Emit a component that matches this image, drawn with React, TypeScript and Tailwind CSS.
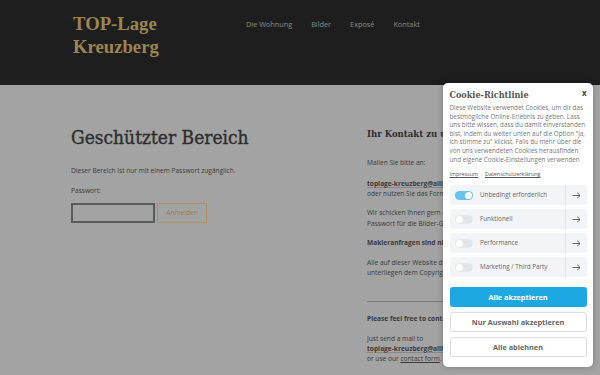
import React from "react";

const sans = { fontFamily: '"Open Sans", "DejaVu Sans", sans-serif' };
const slab = { fontFamily: '"DejaVu Serif Condensed", "DejaVu Serif", serif', fontStretch: "condensed" as const };

function Toggle({ on }: { on?: boolean }) {
  return (
    <div
      className={`relative h-[9px] w-[18px] rounded-full ${on ? "bg-[#68c2ea]" : "bg-[#e4e5eb]"}`}
    >
      <div
        className={`absolute top-[1px] h-[7px] w-[7px] rounded-full bg-white ${on ? "left-[10px]" : "left-[1px]"}`}
      />
    </div>
  );
}

function Row({ label, on }: { label: string; on?: boolean }) {
  return (
    <div className="flex h-[20px] items-center rounded-[3px] bg-[#f3f4f7]">
      <div className="flex flex-1 items-center gap-[7px] pl-[5px]">
        <Toggle on={on} />
        <span className="text-[6.3px] text-[#666]">{label}</span>
      </div>
      <div className="h-full w-px bg-[#e2e3e8]" />
      <div className="flex w-[21px] items-center justify-center text-[#555]">
        <svg width="9" height="7" viewBox="0 0 9 7" fill="none" stroke="currentColor" strokeWidth="0.9">
          <path d="M0.5 3.5H8M5.2 0.8L8 3.5L5.2 6.2" />
        </svg>
      </div>
    </div>
  );
}

export default function App() {
  return (
    <div className="relative h-[375px] w-[600px] overflow-hidden bg-[#a3a3a3]" style={sans}>
      <header className="flex h-[85px] bg-[#1e1e1e] pt-[12px]">
        <div
          className="w-[246px] shrink-0 pl-[73px] text-[18.7px] font-bold leading-[23px] text-[#9c8550]"
          style={{ fontFamily: '"Liberation Serif", serif' }}
        >
          <div>TOP-Lage</div>
          <div>Kreuzberg</div>
        </div>
        <nav className="flex gap-[19px] pt-[7px] text-[7.3px] leading-[10px] text-[#8a8a8a]">
          <span>Die Wohnung</span>
          <span>Bilder</span>
          <span>Exposé</span>
          <span>Kontakt</span>
        </nav>
      </header>

      <main className="flex">
        <section className="w-[367px] shrink-0 pl-[71px] text-[#3a3a3a]">
          <h1
            className="mt-[40px] text-[19px] leading-[24px] text-[#2d2d2d] [-webkit-text-stroke:0.35px_#2d2d2d]"
            style={slab}
          >
            Geschützter Bereich
          </h1>
          <p className="mt-[17px] whitespace-nowrap text-[6.6px] leading-[10px]">
            Dieser Bereich ist nur mit einem Passwort zugänglich.
          </p>
          <p className="mt-[10px] text-[6.6px] leading-[10px]">Passwort:</p>
          <div className="mt-[7px] flex gap-[2px]">
            <div className="h-[20px] w-[84px] border-2 border-[#5a5a5a]" />
            <div className="flex h-[20px] w-[50px] items-center justify-center border-[1.5px] border-[#b38f60] text-[6.6px] text-[#977a56]">
              Anmelden
            </div>
          </div>
        </section>

        <section className="w-[220px] shrink-0 whitespace-nowrap text-[6.6px] leading-[10px] text-[#3a3a3a]">
          <h2 className="mt-[42px] text-[9.5px] font-bold leading-[14px] text-[#2d2d2d]" style={slab}>
            Ihr Kontakt zu uns
          </h2>
          <p className="mt-[17px]">Mailen Sie bitte an:</p>
          <p className="mt-[11px]">
            <span className="font-bold underline decoration-[#888]">toplage-kreuzberg@alliance-immobilien.de</span>
            <br />
            oder nutzen Sie das Formular unten.
          </p>
          <p className="mt-[9px] leading-[10.5px]">
            Wir schicken Ihnen gern das Exposé und das
            <br />
            Passwort für die Bilder-Galerie zu.
          </p>
          <p className="mt-[9px] font-bold">Makleranfragen sind nicht erwünscht.</p>
          <p className="mt-[10px]">
            Alle auf dieser Website dargestellten Bilder
            <br />
            unterliegen dem Copyright.
          </p>
          <div className="mt-[23px] h-px w-full bg-[#7a7a7a]" />
          <p className="mt-[12px] font-bold">Please feel free to contact us.</p>
          <p className="mt-[10px]">
            Just send a mail to
            <br />
            <span className="font-bold underline decoration-[#888]">toplage-kreuzberg@alliance-immobilien.de</span>
            <br />
            or use our <span className="underline">contact form</span>.
          </p>
        </section>
      </main>

      <div className="absolute left-[443px] top-[83px] h-[284px] w-[150px] rounded-[5px] bg-white px-[6.5px] pt-[5px] shadow-[0_0_6px_rgba(0,0,0,0.25)]">
        <div className="flex items-start justify-between">
          <div className="text-[9px] font-bold leading-[14px] text-[#555]" style={slab}>
            Cookie-Richtlinie
          </div>
          <div className="pt-[1px] text-[8px] font-bold leading-[8px] text-[#444]">x</div>
        </div>
        <p className="mt-[2px] whitespace-nowrap text-[6.3px] leading-[8.6px] text-[#777]">
          Diese Website verwendet Cookies, um dir das
          <br />
          bestmögliche Online-Erlebnis zu geben. Lass
          <br />
          uns bitte wissen, dass du damit einverstanden
          <br />
          bist, indem du weiter unten auf die Option "ja,
          <br />
          ich stimme zu" klickst. Falls du mehr über die
          <br />
          von uns verwendeten Cookies herausfinden
          <br />
          und eigene Cookie-Einstellungen verwenden
        </p>
        <div className="mt-[7px] flex gap-[7px] text-[5.4px] leading-[7px] text-[#555] underline">
          <span>Impressum</span>
          <span>Datenschutzerklärung</span>
        </div>
        <div className="mt-[7px] flex flex-col gap-[4px] pl-[0.5px]">
          <Row label="Unbedingt erforderlich" on />
          <Row label="Funktionell" />
          <Row label="Performance" />
          <Row label="Marketing / Third Party" />
        </div>
        <div className="mt-[10px] flex flex-col gap-[5px] text-[7.3px] font-bold">
          <div className="flex h-[20px] items-center justify-center rounded-[3px] bg-[#1ea8e2] text-white">
            Alle akzeptieren
          </div>
          <div className="flex h-[20px] items-center justify-center rounded-[3px] border border-[#dcdde3] text-[#666]">
            Nur Auswahl akzeptieren
          </div>
          <div className="flex h-[20px] items-center justify-center rounded-[3px] border border-[#dcdde3] text-[#666]">
            Alle ablehnen
          </div>
        </div>
      </div>
    </div>
  );
}
